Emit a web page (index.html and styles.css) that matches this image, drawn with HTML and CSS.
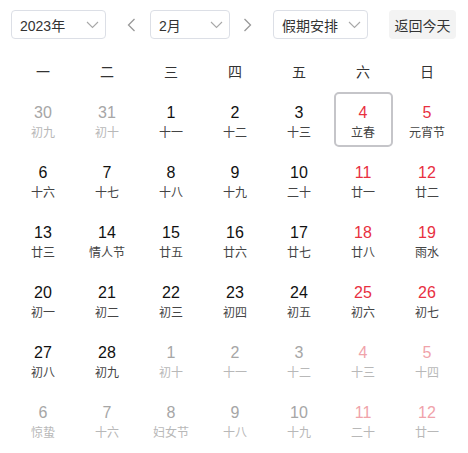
FILE: index.html
```html
<!DOCTYPE html>
<html lang="zh-CN">
<head>
<meta charset="utf-8">
<title>日历</title>
<link rel="stylesheet" href="styles.css">
</head>
<body>
<div class="cal">
  <div class="toolbar">
    <div class="select w95"><span>2023年</span><svg class="chev" width="13" height="8" viewBox="0 0 13 8"><path d="M1 1 L6.5 6.5 L12 1" fill="none" stroke="#a8a8a8" stroke-width="1.1"/></svg></div>
    <svg class="arrow prev" width="9" height="14" viewBox="0 0 9 14"><path d="M7.5 1 L1.5 7 L7.5 13" fill="none" stroke="#999" stroke-width="1.3"/></svg>
    <div class="select w80"><span>2月</span><svg class="chev" width="13" height="8" viewBox="0 0 13 8"><path d="M1 1 L6.5 6.5 L12 1" fill="none" stroke="#a8a8a8" stroke-width="1.1"/></svg></div>
    <svg class="arrow next" width="9" height="14" viewBox="0 0 9 14"><path d="M1.5 1 L7.5 7 L1.5 13" fill="none" stroke="#999" stroke-width="1.3"/></svg>
    <div class="select w95"><span>假期安排</span><svg class="chev" width="13" height="8" viewBox="0 0 13 8"><path d="M1 1 L6.5 6.5 L12 1" fill="none" stroke="#a8a8a8" stroke-width="1.1"/></svg></div>
    <div class="today">返回今天</div>
  </div>
  <div class="weekdays">
    <div>一</div><div>二</div><div>三</div><div>四</div><div>五</div><div>六</div><div>日</div>
  </div>
  <div class="grid">
    <div class="cell other"><div class="num">30</div><div class="lunar">初九</div></div>
    <div class="cell other"><div class="num">31</div><div class="lunar">初十</div></div>
    <div class="cell"><div class="num">1</div><div class="lunar">十一</div></div>
    <div class="cell"><div class="num">2</div><div class="lunar">十二</div></div>
    <div class="cell"><div class="num">3</div><div class="lunar">十三</div></div>
    <div class="cell weekend selected"><div class="num">4</div><div class="lunar">立春</div></div>
    <div class="cell weekend"><div class="num">5</div><div class="lunar">元宵节</div></div>

    <div class="cell"><div class="num">6</div><div class="lunar">十六</div></div>
    <div class="cell"><div class="num">7</div><div class="lunar">十七</div></div>
    <div class="cell"><div class="num">8</div><div class="lunar">十八</div></div>
    <div class="cell"><div class="num">9</div><div class="lunar">十九</div></div>
    <div class="cell"><div class="num">10</div><div class="lunar">二十</div></div>
    <div class="cell weekend"><div class="num">11</div><div class="lunar">廿一</div></div>
    <div class="cell weekend"><div class="num">12</div><div class="lunar">廿二</div></div>

    <div class="cell"><div class="num">13</div><div class="lunar">廿三</div></div>
    <div class="cell"><div class="num">14</div><div class="lunar">情人节</div></div>
    <div class="cell"><div class="num">15</div><div class="lunar">廿五</div></div>
    <div class="cell"><div class="num">16</div><div class="lunar">廿六</div></div>
    <div class="cell"><div class="num">17</div><div class="lunar">廿七</div></div>
    <div class="cell weekend"><div class="num">18</div><div class="lunar">廿八</div></div>
    <div class="cell weekend"><div class="num">19</div><div class="lunar">雨水</div></div>

    <div class="cell"><div class="num">20</div><div class="lunar">初一</div></div>
    <div class="cell"><div class="num">21</div><div class="lunar">初二</div></div>
    <div class="cell"><div class="num">22</div><div class="lunar">初三</div></div>
    <div class="cell"><div class="num">23</div><div class="lunar">初四</div></div>
    <div class="cell"><div class="num">24</div><div class="lunar">初五</div></div>
    <div class="cell weekend"><div class="num">25</div><div class="lunar">初六</div></div>
    <div class="cell weekend"><div class="num">26</div><div class="lunar">初七</div></div>

    <div class="cell"><div class="num">27</div><div class="lunar">初八</div></div>
    <div class="cell"><div class="num">28</div><div class="lunar">初九</div></div>
    <div class="cell other"><div class="num">1</div><div class="lunar">初十</div></div>
    <div class="cell other"><div class="num">2</div><div class="lunar">十一</div></div>
    <div class="cell other"><div class="num">3</div><div class="lunar">十二</div></div>
    <div class="cell other weekend"><div class="num">4</div><div class="lunar">十三</div></div>
    <div class="cell other weekend"><div class="num">5</div><div class="lunar">十四</div></div>

    <div class="cell other"><div class="num">6</div><div class="lunar">惊蛰</div></div>
    <div class="cell other"><div class="num">7</div><div class="lunar">十六</div></div>
    <div class="cell other"><div class="num">8</div><div class="lunar">妇女节</div></div>
    <div class="cell other"><div class="num">9</div><div class="lunar">十八</div></div>
    <div class="cell other"><div class="num">10</div><div class="lunar">十九</div></div>
    <div class="cell other weekend"><div class="num">11</div><div class="lunar">二十</div></div>
    <div class="cell other weekend"><div class="num">12</div><div class="lunar">廿一</div></div>
  </div>
</div>
</body>
</html>
```
FILE: styles.css
```css
* { box-sizing: border-box; }
html, body { margin: 0; padding: 0; background: #fff; }
body {
  font-family: "Liberation Sans", "Noto Sans CJK SC", sans-serif;
  color: #333;
}
.cal { padding: 10px 10px 0 10px; width: 468px; }
.toolbar {
  display: flex;
  align-items: center;
  height: 29px;
}
.select {
  height: 29px;
  border: 1px solid #dcdfe6;
  border-radius: 4px;
  display: flex;
  align-items: center;
  justify-content: space-between;
  padding: 0 6px 0 8px;
  font-size: 14px;
  color: #333;
}
.select:first-child { margin-left: 1px; }
.w95 { width: 95px; }
.w80 { width: 80px; }
.chev { display: block; }
.arrow { display: block; }
.arrow.prev { margin: 0 14px 0 21px; }
.arrow.next { margin: 0 21px 0 13px; }
.today {
  margin-left: 21px;
  width: 67px;
  height: 29px;
  border-radius: 4px;
  background: #f3f3f3;
  font-size: 14px;
  color: #333;
  display: flex;
  align-items: center;
  justify-content: center;
}
.weekdays {
  margin-top: 23px;
  margin-left: 1px;
  display: grid;
  grid-template-columns: repeat(7, 64px);
  font-size: 14px;
  line-height: 20px;
  text-align: center;
  color: #333;
}
.grid {
  margin-top: 10px;
  margin-left: 1px;
  display: grid;
  grid-template-columns: repeat(7, 64px);
  grid-auto-rows: 60px;
}
.cell {
  width: 59px;
  height: 55px;
  margin: 0 auto;
  border: 2px solid transparent;
  border-radius: 5px;
  text-align: center;
  padding-top: 9px;
}
.cell.selected { border-color: #c5c5c9; }
.num {
  font-size: 16px;
  line-height: 20px;
  color: #111;
}
.lunar {
  margin-top: 2px;
  font-size: 12px;
  line-height: 16px;
  color: #444;
}
.weekend .num { color: #e8303f; }
.other .num { color: #a6a6a6; }
.other .lunar { color: #b8b8b8; }
.other.weekend .num { color: #f0a3aa; }
```
